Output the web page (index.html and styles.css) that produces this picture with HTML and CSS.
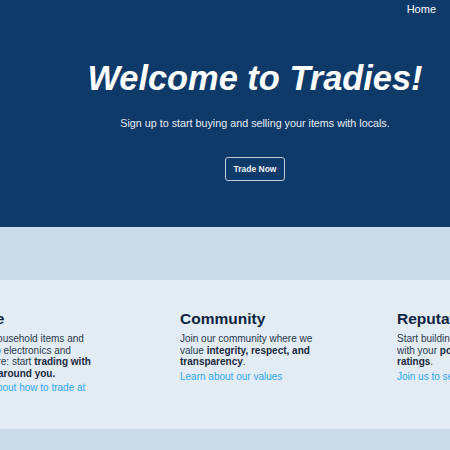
FILE: index.html
```html
<!DOCTYPE html>
<html>
<head>
<meta charset="utf-8">
<link rel="stylesheet" href="styles.css">
</head>
<body>
<header class="hero">
  <nav class="nav"><a class="nav-link" href="#">Home</a></nav>
  <div class="hero-inner">
    <h1 class="title">Welcome to Tradies!</h1>
    <p class="subtitle">Sign up to start buying and selling your items with locals.</p>
    <a class="btn" href="#">Trade Now</a>
  </div>
</header>
<section class="band">
  <div class="panel">
    <div class="cards">
      <div class="card">
        <h2 class="card-title">Trade</h2>
        <p class="card-text">Trade household items and books to electronics and anywhere: start <b>trading with people around you.</b></p>
        <a class="card-link" href="#">Learn about how to trade at</a>
      </div>
      <div class="card">
        <h2 class="card-title">Community</h2>
        <p class="card-text">Join our community where we value <b>integrity, respect, and transparency</b>.</p>
        <a class="card-link" href="#">Learn about our values</a>
      </div>
      <div class="card">
        <h2 class="card-title">Reputation</h2>
        <p class="card-text">Start building your reputation with your <b>positive trades and ratings</b>.</p>
        <a class="card-link" href="#">Join us to see more</a>
      </div>
    </div>
  </div>
</section>
</body>
</html>
```
FILE: styles.css
```css
* { box-sizing: border-box; }
html, body { margin: 0; padding: 0; }
body {
  font-family: "Liberation Sans", Arial, sans-serif;
  background: #cbdbea;
  overflow: hidden;
  width: 450px;
  height: 450px;
}
.hero {
  background: #0e3a6a;
  height: 227px;
  color: #fff;
}
.nav {
  display: flex;
  justify-content: flex-end;
  padding: 3px 14px 0 0;
  height: 20px;
}
.nav-link {
  color: #fff;
  text-decoration: none;
  font-size: 11px;
}
.hero-inner {
  margin-left: 60px;
  width: 390px;
  display: flex;
  flex-direction: column;
  align-items: center;
}
.title {
  margin: 38px 0 0;
  font-size: 34.4px;
  font-weight: bold;
  font-style: italic;
  white-space: nowrap;
  line-height: 40px;
}
.subtitle {
  margin: 19px 0 0;
  font-size: 10.75px;
  line-height: 13px;
  white-space: nowrap;
  color: #e8eef5;
}
.btn {
  margin-top: 27px;
  display: flex;
  align-items: center;
  justify-content: center;
  border: 1px solid #c2ccd8;
  border-radius: 3px;
  color: #eef2f7;
  text-decoration: none;
  font-size: 8.5px;
  font-weight: bold;
  white-space: nowrap;
  height: 24px;
  width: 60px;
}
.band {
  padding-top: 53px;
}
.panel {
  background: #e3ebf4;
  height: 149px;
  overflow: hidden;
}
.cards {
  display: flex;
  gap: 72px;
  margin-left: -37px;
  padding-top: 30px;
}
.card {
  flex: 0 0 145px;
  min-width: 0;
  color: #2a3a4c;
}
.card-title {
  margin: 0;
  font-size: 15.5px;
  color: #0e2440;
  line-height: 18px;
}
.card-text {
  margin: 5px 0 0;
  font-size: 10px;
  line-height: 11.5px;
}
.card-text b { color: #1a2a3c; }
.card-link {
  display: block;
  margin-top: 3px;
  font-size: 10px;
  line-height: 12px;
  color: #2ea8f0;
  text-decoration: none;
}
```
